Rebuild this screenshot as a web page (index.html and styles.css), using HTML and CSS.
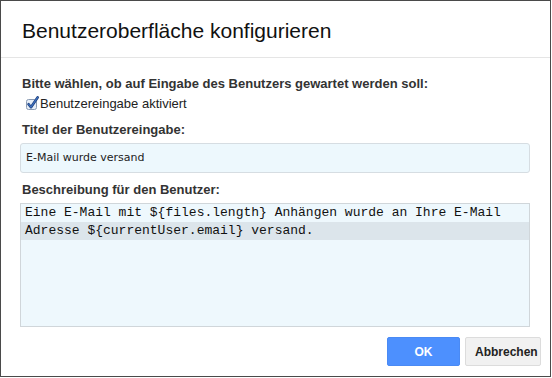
FILE: index.html
```html
<!DOCTYPE html>
<html lang="de">
<head>
<meta charset="utf-8">
<title>Benutzeroberfläche konfigurieren</title>
<link rel="stylesheet" href="styles.css">
</head>
<body>
<div class="dialog">
  <div class="header">
    <h1 class="title">Benutzeroberfläche konfigurieren</h1>
  </div>
  <div class="content">
    <div class="label label-first">Bitte wählen, ob auf Eingabe des Benutzers gewartet werden soll:</div>
    <label class="check-row">
      <svg class="checkbox" width="14" height="14" viewBox="0 0 14 14">
        <rect x="1.5" y="3.5" width="10" height="10" rx="2" fill="#e6eef8" stroke="#8a9bb3"/>
        <path d="M3.6 8.2 L6 11.2 L12.6 1.4" fill="none" stroke="#1d3f7a" stroke-width="2.6" stroke-linecap="round" stroke-linejoin="round"/>
        <path d="M3.6 8.2 L6 11.2 L12.6 1.4" fill="none" stroke="#3d6fc0" stroke-width="1.2" stroke-linecap="round" stroke-linejoin="round"/>
      </svg>
      <span>Benutzereingabe aktiviert</span>
    </label>
    <div class="label label-title">Titel der Benutzereingabe:</div>
    <div class="input">E-Mail wurde versand</div>
    <div class="label label-desc">Beschreibung für den Benutzer:</div>
    <div class="editor">
      <div class="line">Eine E-Mail mit ${files.length} Anhängen wurde an Ihre E-Mail</div>
      <div class="line active">Adresse ${currentUser.email} versand.</div>
    </div>
    <div class="footer">
      <button class="btn btn-primary">OK</button>
      <button class="btn btn-default">Abbrechen</button>
    </div>
  </div>
</div>
</body>
</html>
```

FILE: styles.css
```css
* { box-sizing: border-box; }
html, body { margin: 0; padding: 0; background: #ffffff; }
body { font-family: "Liberation Sans", Arial, sans-serif; color: #222; }

.dialog {
  width: 551px;
  height: 377px;
  border: 1px solid #4a4a4a;
  background: #fff;
  display: flex;
  flex-direction: column;
}

.header {
  height: 57px;
  border-bottom: 1px solid #e5e5e5;
  padding: 17px 0 0 21px;
}
.title {
  margin: 0;
  font-size: 21px;
  font-weight: normal;
  line-height: 25px;
  color: #111;
}

.content {
  padding: 0 20px 0 19px;
  display: flex;
  flex-direction: column;
}

.label {
  font-size: 13px;
  font-weight: bold;
  line-height: 15px;
  color: #333;
  padding-left: 2px;
}
.label-first { margin-top: 18px; }
.label-title { margin-top: 11px; }
.label-desc { margin-top: 9px; }

.check-row {
  margin-top: 5px;
  display: flex;
  align-items: center;
  font-size: 13px;
  line-height: 15px;
  color: #222;
  padding-left: 5px;
}
.checkbox { display: block; margin-right: 1px; margin-top: -2px; }

.input {
  margin-top: 6px;
  height: 30px;
  border: 1px solid #d6dde2;
  border-radius: 3px;
  background: #edf8fd;
  font-family: "DejaVu Sans", Verdana, sans-serif;
  font-size: 11px;
  line-height: 28px;
  padding-left: 5px;
  color: #222;
}

.editor {
  margin-top: 6px;
  height: 124px;
  border: 1px solid #d0d6da;
  background: #eef8fd;
  font-family: "Liberation Mono", "Courier New", monospace;
  font-size: 13px;
  color: #111;
  padding-top: 0;
}
.line {
  height: 18px;
  line-height: 18px;
  padding-left: 4px;
  white-space: pre;
}
.line.active { background: #dce5eb; }

.footer {
  display: flex;
  justify-content: flex-end;
  gap: 5px;
  margin-top: 10px;
  margin-right: -11px;
}
.btn {
  height: 29px;
  border-radius: 2px;
  font-family: "Liberation Sans", Arial, sans-serif;
  font-size: 12px;
  font-weight: bold;
  padding: 0 9px;
  cursor: pointer;
}
.btn-primary {
  width: 73px;
  background: #4d90fe;
  border: 1px solid #4a8af4;
  color: #fff;
}
.btn-default {
  width: 76px;
  background: #f1f1f1;
  border: 1px solid #dcdcdc;
  color: #222;
}
```
